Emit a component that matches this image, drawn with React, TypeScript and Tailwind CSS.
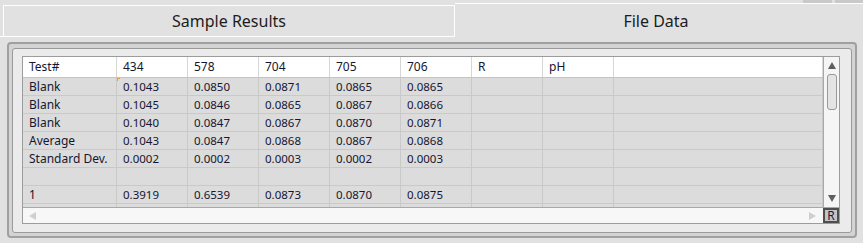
const font = { fontFamily: '"Noto Sans", "Open Sans", sans-serif' };

const headers = ["Test#", "434", "578", "704", "705", "706", "R", "pH", ""];

const rows: string[][] = [
  ["Blank", "0.1043", "0.0850", "0.0871", "0.0865", "0.0865", "", "", ""],
  ["Blank", "0.1045", "0.0846", "0.0865", "0.0867", "0.0866", "", "", ""],
  ["Blank", "0.1040", "0.0847", "0.0867", "0.0870", "0.0871", "", "", ""],
  ["Average", "0.1043", "0.0847", "0.0868", "0.0867", "0.0868", "", "", ""],
  ["Standard Dev.", "0.0002", "0.0002", "0.0003", "0.0002", "0.0003", "", "", ""],
  ["", "", "", "", "", "", "", "", ""],
  ["1", "0.3919", "0.6539", "0.0873", "0.0870", "0.0875", "", "", ""],
  ["", "", "", "", "", "", "", "", ""],
];

const widths = ["w-[94px]", "w-[71px]", "w-[71px]", "w-[71px]", "w-[71px]", "w-[71px]", "w-[71px]", "w-[71px]", "flex-1"];

function Tri({ dir, color }: { dir: "up" | "down" | "left" | "right"; color: string }) {
  const pts = {
    up: "0,7 4,0 8,7",
    down: "0,0 8,0 4,7",
    left: "7,0 7,8 0,4",
    right: "0,0 7,4 0,8",
  }[dir];
  return (
    <svg width="8" height="8" viewBox="0 0 8 8">
      <polygon points={pts} fill={color} />
    </svg>
  );
}

export default function App() {
  return (
    <div className="relative w-[863px] h-[243px] bg-[#e1e1e1] overflow-hidden" style={font}>
      {/* window buttons peeking at the top */}
      <div className="absolute top-0 right-0 flex gap-[3px]">
        <div className="w-[29px] h-[3px] bg-[#c9c9c9]" />
        <div className="w-[28px] h-[3px] bg-[#c9c9c9]" />
      </div>

      {/* Tabs */}
      <div className="flex h-[37px]">
        <div className="w-[455px] border-b border-white flex items-end pl-[3px]">
          <div className="w-[452px] h-[31px] border-l border-t border-r border-white flex items-center justify-center text-[16px] text-[#1c1c1c]">
            Sample Results
          </div>
        </div>
        <div className="flex-1 pt-[3px]">
          <div className="h-[34px] border-t border-white flex items-center justify-center text-[16px] text-[#1c1c1c] pr-[6px]">
            File Data
          </div>
        </div>
      </div>

      {/* Panel frame */}
      <div className="ml-[7px] mt-[5px] w-[850px] h-[196px] rounded-[4px] border-2 border-[#a0a0a0] bg-[#d3d3d3] pt-[4px] px-[3px] pb-[3px]">
        <div className="h-full rounded-[3px] border border-[#9a9a9a] bg-[#ebebeb] pl-[9px] pr-[11px] pt-[7px]">
          {/* Table */}
          <div className="h-[168px] border border-[#9c9c9c] flex flex-col">
            <div className="flex h-[150px]">
              <div className="flex-1 overflow-hidden text-[12px] text-[#161630]">
                <div className="flex h-[21px] bg-white border-b border-[#c4c4c4]">
                  {headers.map((h, i) => (
                    <div
                      key={i}
                      className={`${widths[i]} border-r border-[#d6d6d6] pl-[6px] flex items-center`}
                    >
                      {h}
                    </div>
                  ))}
                </div>
                {rows.map((r, ri) => (
                  <div key={ri} className="flex h-[18px] bg-[#dcdcdc] border-b border-[#c9c9c9]">
                    {r.map((c, ci) => (
                      <div
                        key={ci}
                        className={`${widths[ci]} relative border-r border-[#c9c9c9] pl-[6px] flex items-center ${ci === 0 ? "" : "text-[11.5px]"}`}
                      >
                        {ri === 0 && ci === 1 && (
                          <>
                            <span className="absolute left-0 top-0 w-[3px] h-[1px] bg-[#f0a020]" />
                            <span className="absolute left-0 top-0 w-[1px] h-[3px] bg-[#f0a020]" />
                          </>
                        )}
                        {c}
                      </div>
                    ))}
                  </div>
                ))}
              </div>
              {/* vertical scrollbar */}
              <div className="w-[16px] border-l border-[#a8a8a8] bg-[#f5f5f5] flex flex-col items-center pt-[5px]">
                <Tri dir="up" color="#5e5e5e" />
                <div className="mt-[4px] w-[10px] h-[36px] rounded-[3px] border border-[#9a9a9a] bg-[#e4e4e4]" />
                <div className="flex-1" />
                <div className="mb-[4px]">
                  <Tri dir="down" color="#5e5e5e" />
                </div>
              </div>
            </div>
            <div className="flex h-[16px] border-t border-[#a8a8a8]">
              <div className="flex-1 bg-[#f7f7f7] flex items-center justify-between px-[6px]">
                <Tri dir="left" color="#cfcfcf" />
                <Tri dir="right" color="#cfcfcf" />
              </div>
              <div className="w-[16px] border-2 border-[#4e4e4e] bg-[#c4c4c4] flex items-center justify-center text-[12px] leading-none text-[#1a1a4a]">
                R
              </div>
            </div>
          </div>
        </div>
      </div>
    </div>
  );
}
